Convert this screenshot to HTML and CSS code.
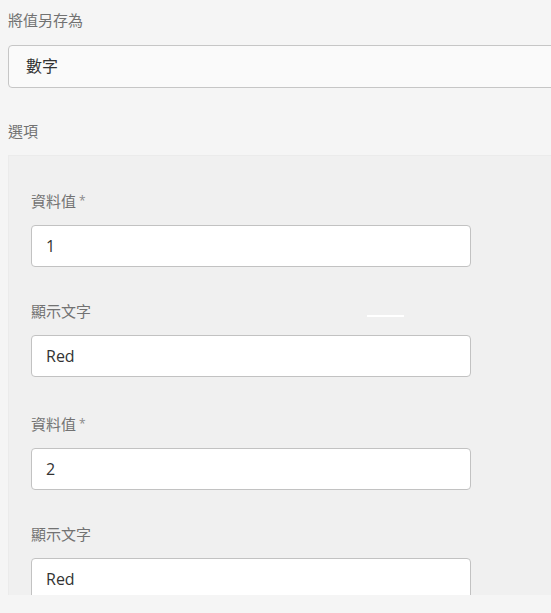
FILE: index.html
```html
<!DOCTYPE html>
<html lang="zh-Hant">
<head>
<meta charset="utf-8">
<link rel="stylesheet" href="styles.css">
</head>
<body>
<div class="page">
  <div class="top">
    <div class="label top-label">將值另存為</div>
    <div class="select">數字</div>
  </div>
  <div class="label opts">選項</div>
  <div class="panel">
    <div class="pair">
      <div class="field">
        <div class="label">資料值<span class="req">*</span></div>
        <div class="input">1</div>
      </div>
      <div class="field">
        <div class="label">顯示文字</div>
        <div class="input">Red</div>
      </div>
    </div>
    <div class="pair">
      <div class="field">
        <div class="label">資料值<span class="req">*</span></div>
        <div class="input">2</div>
      </div>
      <div class="field">
        <div class="label">顯示文字</div>
        <div class="input">Red</div>
      </div>
    </div>
    <div class="glint"></div>
  </div>
</div>
</body>
</html>
```

FILE: styles.css
```css
html, body {
  margin: 0;
  padding: 0;
  background: #f5f5f5;
}
body {
  width: 551px;
  height: 613px;
  overflow: hidden;
  font-family: "Open Sans", "Noto Sans CJK TC", sans-serif;
}
.page {
  padding: 10px 0 0 8px;
}
.label {
  font-size: 15px;
  line-height: 20px;
  color: #727272;
  height: 20px;
}
.top-label {
  margin-bottom: 15px;
}
.select {
  box-sizing: border-box;
  height: 43px;
  width: 560px;
  border: 1px solid #c6c6c6;
  border-radius: 4px;
  background: #fafafa;
  font-size: 16px;
  line-height: 41px;
  padding-left: 17px;
  color: #333333;
}
.opts {
  margin-top: 33px;
  margin-bottom: 14px;
}
.panel {
  position: relative;
  box-sizing: border-box;
  width: 560px;
  height: 440px;
  overflow: hidden;
  background: #f0f0f0;
  border-top: 1px solid #ebebeb;
  border-left: 1px solid #ebebeb;
  padding: 37px 0 0 22px;
  display: flex;
  flex-direction: column;
  gap: 39px;
}
.pair {
  display: flex;
  flex-direction: column;
  gap: 36px;
}
.field .label {
  line-height: 16px;
  height: 16px;
  margin-bottom: 16px;
}
.req {
  font-size: 12px;
  margin-left: 3px;
  vertical-align: top;
  color: #8a8a8a;
}
.input {
  box-sizing: border-box;
  width: 440px;
  height: 42px;
  border: 1px solid #c2c2c2;
  border-radius: 4px;
  background: #ffffff;
  font-size: 16px;
  line-height: 40px;
  padding-left: 14px;
  color: #333333;
}
.glint {
  position: absolute;
  left: 358px;
  top: 159px;
  width: 37px;
  height: 2px;
  background: #ffffff;
}
```
